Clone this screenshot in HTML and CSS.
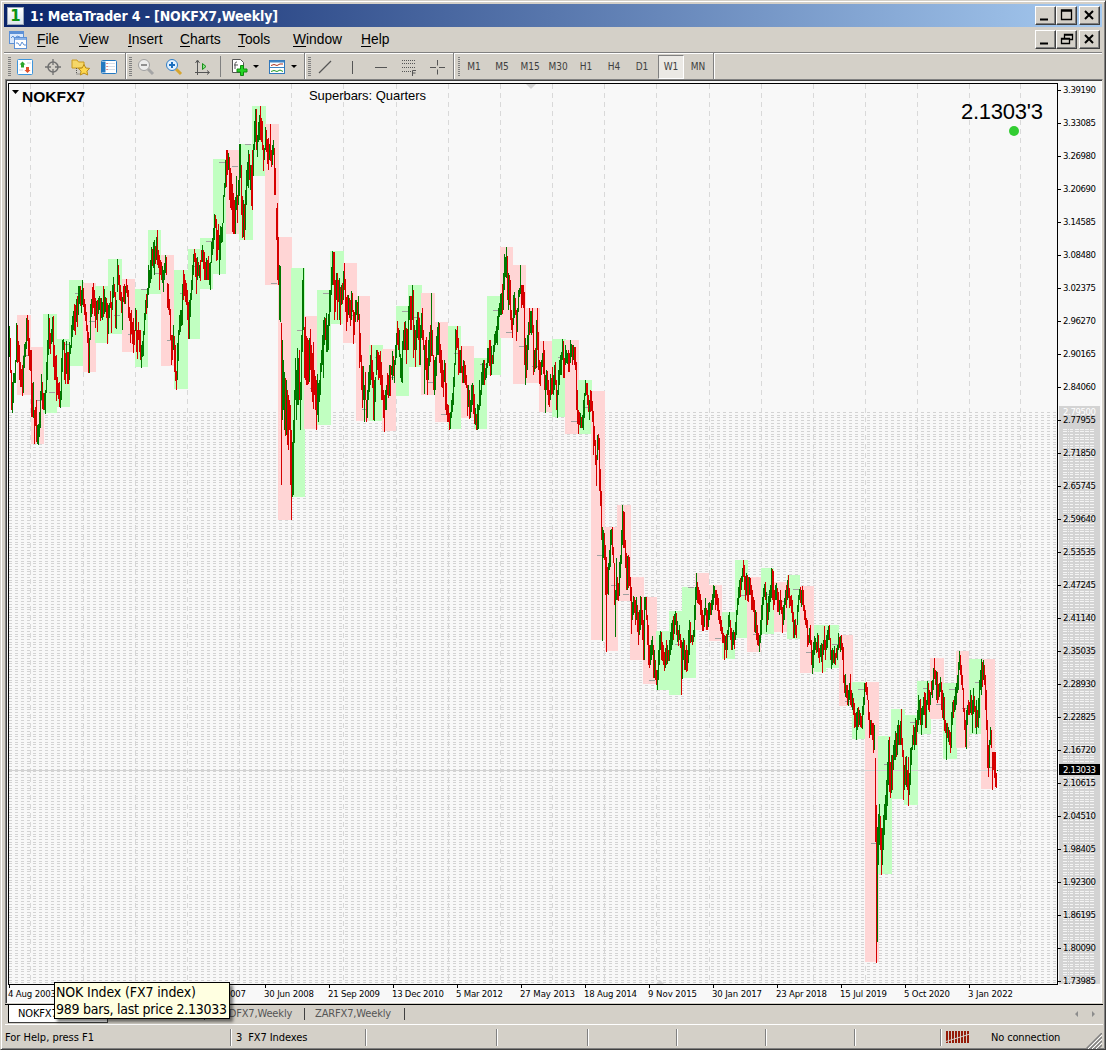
FILE: index.html
```html
<!DOCTYPE html>
<html lang="en">
<head>
    <meta charset="UTF-8">
    <meta name="viewport" content="width=device-width, initial-scale=1.0">
    <link rel="stylesheet" href="styles.css">
    <title>1: MetaTrader 4 - [NOKFX7,Weekly]</title>
</head>
<body>
<div class="window">
    <header class="titlebar">
        <span class="app-icon">1</span>
        <h1 class="title"><svg width="249" height="20"><text x="0" y="15" textLength="248">1: MetaTrader 4 - [NOKFX7,Weekly]</text></svg></h1>
        <div class="controls">
            <span class="ctl"><svg width="17" height="14"><path d="M3 11.5h8" stroke="#000" stroke-width="2"/></svg></span>
            <span class="ctl"><svg width="17" height="14"><path d="M3.5 2v9.500h10v-9.500z M3 3h11" fill="none" stroke="#000" stroke-width="1.300"/></svg></span>
            <span class="ctl ctl-close"><svg width="17" height="14"><path d="M4 3l8 8M12 3l-8 8" stroke="#000" stroke-width="2"/></svg></span>
        </div>
    </header>

    <nav class="menubar">
        <svg class="doc-icon" width="20" height="20">
            <rect x="1.500" y="1.500" width="14" height="12" fill="#d9e8fb" stroke="#5d91d6"/>
            <path d="M2 3h13" stroke="#5d91d6" stroke-width="2"/>
            <path d="M3 8l2-2 2 3 2-3 3 1" fill="none" stroke="#5d91d6"/>
            <rect x="6.500" y="7.500" width="12" height="11" fill="#fff" stroke="#5d91d6"/>
            <path d="M7 9h11" stroke="#8bb3e8" stroke-width="2"/>
            <path d="M8 13h2l2 3 2-4 2 3h2" fill="none" stroke="#5d91d6"/>
        </svg>
        <span class="menu m-file"><u>F</u>ile</span>
        <span class="menu m-view"><u>V</u>iew</span>
        <span class="menu m-insert"><u>I</u>nsert</span>
        <span class="menu m-charts"><u>C</u>harts</span>
        <span class="menu m-tools"><u>T</u>ools</span>
        <span class="menu m-window"><u>W</u>indow</span>
        <span class="menu m-help"><u>H</u>elp</span>
        <div class="controls">
            <span class="ctl"><svg width="17" height="14"><path d="M3 11.500h8" stroke="#000" stroke-width="2"/></svg></span>
            <span class="ctl"><svg width="17" height="14"><path d="M6.500 6V2.500h8v5h-3M6 3h9M3.500 6.500h8v5h-8zM3 7h9" fill="none" stroke="#000" stroke-width="1.300"/></svg></span>
            <span class="ctl ctl-close"><svg width="17" height="14"><path d="M4 3l8 8M12 3l-8 8" stroke="#000" stroke-width="2"/></svg></span>
        </div>
    </nav>

    <div class="toolbar">
        <div class="group">
            <i class="grip"></i>
            <span class="tool"><svg width="18" height="18">
                <rect x="1.500" y="1.500" width="15" height="15" rx="1" fill="#fff" stroke="#3d95dc"/>
                <path d="M6.500 3.500l3 3H8v3H5v-3H3.500z" fill="#2aa52a"/>
                <path d="M11.500 15l-3-3H10V9h3v3h1.500z" fill="#e2502a"/>
                <path d="M11 5h4M3 12h4" stroke="#cbd6e2"/></svg></span>
            <span class="tool"><svg width="18" height="18">
                <circle cx="9" cy="9" r="5" fill="none" stroke="#707070" stroke-width="1.500"/>
                <path d="M9 1v6M9 11v6M1 9h6M11 9h6" stroke="#707070" stroke-width="1.300"/></svg></span>
            <span class="tool"><svg width="20" height="18">
                <path d="M1 2h5l1.500 2H13v6H1z" fill="#f5d768" stroke="#c99a20"/>
                <path d="M5.500 10v6h4" stroke="#555" fill="none" stroke-dasharray="1 1"/>
                <path d="M13 6.500l1.800 3.500 3.900.4-2.800 2.700.8 3.900-3.700-1.900L9.300 17l.8-3.900-2.800-2.700 3.900-.4z" fill="#ffd84d" stroke="#bb8d18"/></svg></span>
            <span class="tool"><svg width="18" height="18">
                <rect x="1.500" y="2.500" width="15" height="13" rx="1" fill="#fff" stroke="#2478c0"/>
                <path d="M2 3.500h3.500v11H2z" fill="#2478c0"/>
                <path d="M7 5.500h8M7 8.500h8M7 11.500h8" stroke="#d5dfe9"/>
                <path d="M6.500 5.500h1M6.500 8.500h1M6.500 11.500h1" stroke="#d33"/></svg></span>
        </div>
        <div class="group">
            <i class="grip"></i>
            <span class="tool"><svg width="18" height="18">
                <path d="M11 11l5 5" stroke="#a5a5a5" stroke-width="3"/>
                <circle cx="7" cy="7" r="5.500" fill="#ececec" stroke="#a0a0a0"/>
                <path d="M4 7h6" stroke="#909090" stroke-width="2"/></svg></span>
            <span class="tool"><svg width="18" height="18">
                <path d="M11 11l5 5" stroke="#d6a52f" stroke-width="3"/>
                <circle cx="7" cy="7" r="5.500" fill="#e2f1ff" stroke="#2f7dc4"/>
                <path d="M4 7h6M7 4v6" stroke="#1a6fc0" stroke-width="2"/></svg></span>
            <span class="tool"><svg width="18" height="18">
                <path d="M4.500 3v14M2 14.500h14M2.500 5l2-3 2 3M14 12.500l2.500 2-2.500 2" fill="none" stroke="#555"/>
                <path d="M9.500 5.500l3.500 3-3.500 3z" fill="#8be08b" stroke="#189018"/></svg></span>
            <i class="thin"></i>
            <span class="tool"><svg width="18" height="18">
                <path d="M2.500 1.500h8l3 3v10h-11z" fill="#fff" stroke="#555"/>
                <path d="M7 4c-2 0-2 1-2 3v4M4 7h4" fill="none" stroke="#555"/>
                <path d="M10.500 7.500h3v3.500h3.500v3h-3.500v3.500h-3V14H7v-3h3.500z" fill="#24d424" stroke="#108a10"/></svg></span>
            <i class="arrow"></i>
            <span class="tool tool-template"><svg width="18" height="18">
                <rect x="1.500" y="2.500" width="15" height="13" fill="#fff" stroke="#3077bb"/>
                <path d="M2 3.500h14" stroke="#3f84c4" stroke-width="2"/>
                <path d="M2 9.500h14" stroke="#3f84c4"/>
                <path d="M3 7.500l3-1 3 1 3-1.500h3" fill="none" stroke="#a32"/>
                <path d="M3 13.500l3-1 3 1 3-1.500 3 1.500" fill="none" stroke="#292"/></svg></span>
            <i class="arrow"></i>
        </div>
        <div class="group">
            <i class="grip"></i>
            <span class="tool"><svg width="18" height="18"><path d="M3 15L15 3" stroke="#555" stroke-width="1.200"/></svg></span>
            <span class="tool"><svg width="18" height="18"><path d="M8.500 3v13" stroke="#555"/></svg></span>
            <span class="tool"><svg width="18" height="18"><path d="M3 9.500h12" stroke="#555"/></svg></span>
            <span class="tool"><svg width="18" height="18"><path d="M2 2.500h14M2 5.500h14M2 9.500h14M2 13.500h10" stroke="#555" stroke-dasharray="1 1"/><path d="M16 12.500h-3.500V18M12.500 15h3" fill="none" stroke="#555"/></svg></span>
            <span class="tool"><svg width="18" height="18"><path d="M9.500 2v5.500M9.500 11.500v5M2 9.500h6M11 9.500h6" stroke="#555"/></svg></span>
        </div>
        <div class="group">
            <i class="grip"></i>
            <span class="tf">M1</span>
            <span class="tf">M5</span>
            <span class="tf">M15</span>
            <span class="tf">M30</span>
            <span class="tf">H1</span>
            <span class="tf">H4</span>
            <span class="tf">D1</span>
            <span class="tf tf-active">W1</span>
            <span class="tf">MN</span>
        </div>
    </div>

    <main class="chart-frame">
        <svg id="chart" class="chart" width="1094" height="921" viewBox="7 81 1094 921"></svg>
    </main>

    <div class="tabs">
        <span class="tab tab-active">NOKFX7,Weekly</span>
        <span class="tab">SEKFX7,Weekly</span>
        <span class="tab">SGDFX7,Weekly</span>
        <span class="tab">ZARFX7,Weekly</span>
        <svg class="scroller" width="26" height="10"><path d="M7 2L4 5l3 3zM21 2l3 3-3 3z" fill="#8c8c8c"/></svg>
    </div>

    <footer class="status">
        <span class="cell c-help">For Help, press F1</span>
        <span class="cell c-profile">3&nbsp; FX7 Indexes</span>
        <span class="cell c-bar"></span>
        <span class="cell c-open"></span>
        <span class="cell c-small"></span>
        <span class="cell c-small"></span>
        <span class="cell c-small"></span>
        <span class="cell c-last"></span>
        <span class="cell c-net">
            <svg width="24" height="13"><path d="M0 6h24" stroke="#951b08" stroke-width="12" stroke-dasharray="2 1"/><path d="M0 10.500L24 3" stroke="#d4d0c8"/></svg>
            No connection
        </span>
        <svg class="resize" width="16" height="16"><path d="M0 16L16 0M4 16L16 4M8 16L16 8M12 16l4-4" stroke="#808080" stroke-width="1.500"/><path d="M2 16L16 2M6 16L16 6M10 16l6-6" stroke="#fff"/></svg>
    </footer>

    <div class="tooltip">
        <svg width="174" height="35"><text x="1" y="14" textLength="140">NOK Index (FX7 index)</text><text x="1" y="31" textLength="171">989 bars, last price 2.13033</text></svg>
    </div>
</div>
<script src="chart.js"></script>
</body>
</html>
```

FILE: styles.css
```css
body {
    margin: 0;
    background: #d4d0c8;
    font-family: "DejaVu Sans Condensed", "DejaVu Sans", sans-serif;
    font-size: 11px;
    color: #000;
}

svg {
    display: block;
}

.window {
    position: relative;
    box-sizing: border-box;
    display: flex;
    flex-direction: column;
    width: 1106px;
    height: 1050px;
    padding: 2px 2px 0 3px;
    border: 1px solid #d4d0c8;
    border-right: 1px solid #404040;
    border-bottom: 1px solid #404040;
    background: #d4d0c8;
    box-shadow: inset 1px 1px #fff, inset -1px -1px #808080;
    overflow: hidden;
}

/* title and menu */

.titlebar {
    display: flex;
    align-items: center;
    box-sizing: border-box;
    height: 23px;
    margin-top: 1px;
    width: 1098px;
    padding: 0 2px 0 3px;
    background: linear-gradient(to right, #0a246a, #a6caf0);
}

.app-icon {
    width: 15px;
    height: 16px;
    border: 1px solid #9aa7b8;
    background: linear-gradient(#fff, #dde6ee);
    color: #0a9312;
    font: bold 15px/16px "DejaVu Sans", sans-serif;
    text-align: center;
}

.title {
    margin: 0 0 0 6px;
    font-size: 14px;
}

.title text {
    fill: #fff;
    font: bold 14px "DejaVu Sans Condensed", "DejaVu Sans", sans-serif;
}

.controls {
    display: flex;
    margin-left: auto;
}

.ctl {
    box-sizing: border-box;
    width: 21px;
    height: 19px;
    padding: 1px;
    border: 1px solid;
    border-color: #fff #404040 #404040 #fff;
    background: #d4d0c8;
    box-shadow: inset -1px -1px #808080;
}

.ctl-close {
    margin-left: 2px;
}

.menubar {
    display: flex;
    align-items: center;
    box-sizing: border-box;
    width: 1098px;
    height: 25px;
    padding: 0 2px 0 4px;
    font: 13.800px "Liberation Sans", Arial, sans-serif;
}

.doc-icon {
    margin-right: 9px;
}

.menu {
    white-space: nowrap;
}

.menu u {
    text-underline-offset: 2px;
}

.m-file { width: 42px; }
.m-view { width: 49px; }
.m-insert { width: 52px; }
.m-charts { width: 58px; }
.m-tools { width: 55px; }
.m-window { width: 68px; }

/* toolbar */

.toolbar {
    display: flex;
    box-sizing: border-box;
    width: 1098px;
    height: 27px;
    border-top: 1px solid #808080;
    box-shadow: inset 0 1px #fff;
}

.group {
    display: flex;
    align-items: center;
    box-sizing: border-box;
    padding: 1px 1px 0 4px;
    border-right: 1px solid #808080;
    box-shadow: 1px 0 #fff;
}

.group:nth-child(1) { width: 122px; }
.group:nth-child(2) { width: 179px; padding-left: 3px; }
.group:nth-child(3) { width: 149px; padding-left: 3px; }
.group:nth-child(4) { width: 260px; }

.grip {
    width: 3px;
    height: 19px;
    background: repeating-linear-gradient(#808080 0 1px, #d4d0c8 1px 2px);
}

.tool {
    display: flex;
    flex: none;
    justify-content: center;
    width: 28px;
}

.thin {
    width: 1px;
    height: 21px;
    margin: 0 4px;
    background: #808080;
}

.tool-template {
    margin-left: 4px;
}

.arrow {
    width: 0;
    height: 0;
    border: 3px solid transparent;
    border-top-color: #000;
    border-bottom: 0;
}

.tf {
    flex: none;
    box-sizing: border-box;
    width: 28px;
    font-size: 10px;
    line-height: 22px;
    text-align: center;
    color: #404040;
}

.tf-active {
    width: 26px;
    margin: 0 0 0 2px;
    border: 1px solid;
    border-color: #808080 #fff #fff #808080;
    background: #ebe9e5;
}

/* chart */

.chart-frame {
    box-sizing: border-box;
    width: 1098px;
    height: 925px;
    margin-left: 1px;
    border: 1px solid;
    border-color: #808080 #d4d0c8 #d4d0c8 #808080;
    background: #f8f8f8;
    box-shadow: inset 1px 1px #404040, inset -1px -1px #fff;
}

.chart {
    margin: 1px;
}

.chart text {
    font-family: "DejaVu Sans Condensed", "DejaVu Sans", sans-serif;
    font-size: 9.500px;
}

.chart .symbol {
    font: bold 15.500px "Liberation Sans", Arial, sans-serif;
}

.chart .caption {
    font: 13px "Liberation Sans", Arial, sans-serif;
}

.chart .quote {
    font: 22px "Liberation Sans", Arial, sans-serif;
}

.chart .label-light {
    fill: #fff;
}

/* chart tabs */

.tabs {
    display: flex;
    flex: none;
    box-sizing: border-box;
    width: 1098px;
    height: 21px;
    margin-left: 1px;
    padding-left: 3px;
    border-top: 1px solid #000;
    border-bottom: 1px solid #fff;
}

.tab {
    position: relative;
    box-sizing: border-box;
    width: 100px;
    padding-left: 7px;
    line-height: 17px;
    letter-spacing: -.15px;
    color: #555;
}

.tab:not(.tab-active)::after {
    content: "";
    position: absolute;
    right: 3px;
    top: 3px;
    width: 1px;
    height: 12px;
    background: #404040;
}

.tab-active {
    height: 18px;
    padding-left: 9px;
    border-right: 1px solid #404040;
    border-bottom: 1px solid #404040;
    border-left: 1px solid #000;
    background: #fff;
    color: #000;
}

.scroller {
    margin: 4px 6px 0 auto;
}

/* status bar */

.status {
    display: flex;
    flex: none;
    align-items: center;
    height: 24px;
    width: 1098px;
}

.cell {
    display: flex;
    align-items: center;
    box-sizing: border-box;
    height: 17px;
    padding-left: 3px;
    border-right: 1px solid #808080;
    box-shadow: 1px 0 #fff;
    white-space: pre;
}

.c-help { width: 227px; padding-left: 1px; }
.c-profile { width: 135px; padding-left: 5px; letter-spacing: -.1px; }
.c-bar { width: 131px; }
.c-open { width: 91px; }
.c-small { width: 89px; }
.c-last { width: 86px; }
.c-net { gap: 21px; padding-left: 5px; border: 0; box-shadow: none; letter-spacing: -.15px; }

.cell.c-net {
    white-space: nowrap;
}

.resize {
    margin-left: auto;
    align-self: flex-end;
}

.tooltip {
    position: absolute;
    left: 53px;
    top: 981px;
    width: 174px;
    height: 35px;
    border: 1px solid #000;
    background: #ffffe1;
    box-shadow: 3px 3px 3px rgba(0, 0, 0, .5);
}

.tooltip text {
    font: 14px "DejaVu Sans Condensed", "DejaVu Sans", sans-serif;
}
```

FILE: chart.js
```js
const NS = 'http://www.w3.org/2000/svg';
const chart = document.getElementById('chart');

function add(name, attrs, text) {
    const el = document.createElementNS(NS, name);
    for (const key in attrs) el.setAttribute(key, attrs[key]);
    if (text) el.textContent = text;
    chart.appendChild(el);
    return el;
}

function rect(x, y, width, height, fill) {
    add('rect', { x, y, width, height, fill, 'shape-rendering': 'crispEdges' });
}

function path(d, stroke, dash) {
    const attrs = { d, stroke, fill: 'none', 'shape-rendering': 'crispEdges' };
    if (dash) attrs['stroke-dasharray'] = dash;
    add('path', attrs);
}

// quarter boxes: left, top, right, bottom, direction, close mark
const quarters = `
17 315 31 395 r 355|31 347 44 444 r 400|43 314 57 413 g 392|57 339 70 407 g 344|69 280 83 366 g 293
83 283 96 372 r 321|95 286 109 343 g 0|108 259 122 334 g 315|122 279 135 352 r 334|135 289 148 367 g 289
148 230 161 294 g 273|161 255 174 366 r 340|174 270 188 389 g 293|188 249 200 339 g 266|200 238 213 289 g 241
213 159 226 274 g 162|226 150 240 234 r 166|239 144 253 240 g 144|252 106 266 176 g 0|265 124 279 285 r 283
278 237 292 520 r 0|291 268 305 497 g 330|304 316 318 429 r 388|317 290 331 425 g 293|330 251 344 324 g 0
343 263 357 343 r 315|356 296 370 421 r 409|369 345 383 421 g 357|382 349 396 431 r 377|396 306 409 396 g 311
408 285 422 367 g 317|421 293 435 395 r 382|435 322 448 422 r 414|448 326 461 429 g 353|461 346 474 418 r 0
474 358 487 429 g 364|487 296 501 375 g 310|500 247 513 338 r 332|513 265 526 384 r 346|526 308 540 383 r 366
539 341 552 412 r 0|552 339 566 417 g 357|565 340 579 434 r 421|578 380 592 434 g 407|591 391 605 640 r 555
605 527 618 651 r 585|617 505 631 601 r 594|630 577 644 660 r 0|643 597 657 684 r 680|656 631 670 690 g 0
669 611 682 695 g 644|682 587 696 678 g 587|695 573 709 630 r 615|709 585 722 641 r 638|722 612 735 659 g 636
735 560 748 638 g 595|747 577 761 652 r 634|761 568 774 634 g 594|774 582 787 632 r 601|787 575 800 639 g 589
800 586 814 673 r 652|814 625 826 672 g 0|826 625 839 668 g 644|839 635 853 706 r 701|852 682 866 739 g 689
865 682 879 962 r 843|878 736 892 874 g 764|891 709 905 799 g 0|904 715 918 805 g 722|917 681 931 734 g 688
930 658 944 719 r 704|943 683 957 759 g 689|956 651 969 748 r 708|969 659 982 734 g 682|981 659 995 789 r 767`;

// weekly bars, one per pixel column: start column, then high-low of each bar
const bars = `
9 g326-357 r338-373 r370-410 g382-413 g373-403 g373-383 g360-383 g323-362 r325-363 r341-362 r345-380
20 r362-387 r369-387 r365-396 g356-393 g344-368 g342-357 g318-349 r315-341 r320-356 r338-370
30 r350-371 r350-417 r383-417 g382-418 r410-444 r407-426 r400-442 g425-444 g424-445 g412-437
40 g391-428 g374-400 r382-409 r393-410 g393-410 g390-414 g362-393 g340-380 g314-355 r318-349
50 r333-354 g329-344 g317-342 r316-367 r345-380 r356-380 r355-401 r377-395 r383-399 r382-407
60 g391-408 g358-400 g340-372 g339-350 r342-380 r353-384 g341-374 r352-384 r352-384 g342-380
70 g345-354 g325-348 g316-337 g311-330 r304-331 r305-335 g299-322 r296-327 g286-315 g286-304
80 r286-306 g290-313 g280-305 r288-307 r299-315 r304-321 r312-331 r325-343 r332-373 g338-373
90 g304-340 g299-317 r287-314 r283-308 r290-316 r298-328 g301-320 r300-332 g298-314 g296-310
100 r298-321 g298-318 g302-320 r286-317 g289-314 g297-312 r298-318 r303-344 g305-334 g303-318
110 r291-308 r302-333 g285-310 g277-298 r284-297 r292-328 g300-329 g259-292 r265-285 r275-300
120 r285-301 r292-313 g297-330 r286-302 r284-304 g286-304 r279-293 r285-297 r290-318 r307-321
130 r313-343 r310-334 r322-344 r318-353 r330-345 g308-331 r310-352 r330-359 r322-340 r330-352
140 r330-360 g345-368 g341-357 g331-356 g313-335 g300-320 r294-314 g288-308 g265-295 g270-288
150 g260-283 g247-279 r249-266 g242-268 g240-275 r246-264 g237-260 r230-265 r250-268 r255-290
160 r260-275 r262-280 g266-283 g270-292 g263-280 g255-273 r257-275 r283-308 r284-310 r299-315
170 r309-340 r335-365 r335-360 g325-350 r336-372 r345-381 r371-390 g343-380 g330-361 g315-335
180 g310-332 g310-326 g284-325 r270-300 r274-296 r280-302 r283-305 r290-320 r302-339 g300-339
190 g293-317 g280-300 g265-290 g254-275 r249-262 r253-277 r258-294 g257-280 r262-276 g265-278
200 r260-281 r250-262 g245-262 r250-269 r252-280 r262-280 g258-280 r260-280 r256-280 g263-285
210 g262-290 g242-263 g238-255 g228-249 g214-240 r215-228 r219-261 r230-260 r224-250 g235-275
220 g226-260 g227-243 g223-242 g195-223 g183-197 g160-188 r150-187 r150-175 g153-170 r157-200
230 r168-208 r173-210 r184-232 r193-234 r200-234 g197-234 g176-210 r195-223 g180-205 g144-196
240 g144-178 r165-215 r196-238 g200-237 r204-240 g190-230 g170-205 g162-186 g150-188 r154-180
250 g165-190 r165-206 r150-210 g144-176 g121-150 g109-142 r109-150 g135-157 g122-142 g115-140
260 r106-140 r118-142 r121-150 r145-171 g148-160 g127-150 r130-152 r139-164 r138-170 g144-160
270 r124-161 r150-167 g145-165 g140-155 r148-195 r168-195 r208-240 r203-280 r237-285 g265-320
280 g266-322 r323-485 g340-420 g360-410 g372-430 r378-436 g380-435 r390-445 r395-450 r400-430
290 r405-485 r430-520 g442-497 g420-495 g390-443 g358-400 g370-420 g348-405 g358-405 r350-400
300 g382-430 g335-400 g280-352 g268-330 r327-378 r317-380 r336-385 r338-385 r340-384 g338-382
310 r329-370 r345-392 r353-402 r342-409 r370-395 r376-410 r380-430 g374-415 g383-422 g380-402
320 g363-395 g350-372 g335-365 g320-378 g317-345 r318-340 g313-352 g325-352 g314-350 g290-326
330 g290-312 g267-295 g251-285 r252-285 r252-320 r280-312 g273-300 r273-320 r280-302 g278-320
340 r287-325 g285-305 r283-304 g271-300 r263-290 r279-312 r297-331 r295-322 g295-315 r298-318
350 r300-326 g291-320 r293-312 r310-344 r312-335 g300-322 g300-315 r302-322 g296-320 r314-368
360 r333-362 r355-390 r366-408 g366-400 g385-422 r372-400 r400-422 g390-418 g372-400 g365-392
370 g355-385 r345-380 r360-388 r372-420 g380-421 g377-402 g350-375 r350-370 r352-380 r355-378
380 r351-385 r362-400 r375-400 r390-418 r395-432 g390-410 g385-410 r373-395 r375-398 g365-396
390 r365-396 g366-375 g351-380 r356-376 g360-383 g345-365 g333-358 r321-345 r328-350 g330-357
400 g354-378 g358-382 g341-383 g330-350 r322-350 g321-350 r328-364 r329-350 g306-350 g296-320
410 r296-330 r296-330 g285-320 r290-358 g325-350 r330-367 g320-350 g312-338 r312-340 r318-365
420 g325-365 g313-338 r308-340 r330-350 g345-394 r340-370 r337-380 r358-395 g340-380 g332-366
430 r325-362 g293-356 r330-356 r355-390 g360-395 g357-390 g336-376 g327-355 g322-355 r323-363
440 r344-373 r350-387 r360-388 r370-397 g360-382 r363-410 r383-415 r404-422 r405-422 r413-430
450 g412-429 g400-418 g393-412 g377-405 g363-387 g329-365 r330-350 r326-348 r338-375 r350-373
460 g350-373 r346-373 r366-383 g360-383 r361-383 r365-385 r375-388 r385-416 g385-407 r390-419
470 g400-418 g385-412 g383-405 r385-414 r394-424 g408-425 r414-430 g404-430 g405-429 g380-410
480 g390-406 g372-395 g363-385 g360-385 r360-385 g368-380 g363-378 g348-368 g348-363 r340-366
490 r340-376 g346-375 r355-364 g345-364 g334-352 g331-345 g326-343 g316-345 g308-330 g303-317
500 g294-315 g293-315 r284-314 g273-310 g254-290 g257-277 g247-278 r256-300 g273-310 r275-305
510 r280-320 r310-330 r318-338 g295-325 g292-318 r298-315 r310-341 g308-332 g290-312 g288-297
520 g265-294 r285-308 r285-305 r285-308 r292-365 g338-385 r345-378 g335-370 g322-350 r308-335
530 g311-333 g311-335 r308-333 r325-375 g350-372 r348-369 g320-368 r308-350 r332-370 r360-384
540 r362-386 g360-375 g353-367 r341-374 r350-390 g375-413 g370-390 r371-395 r380-405 r390-407
550 g374-400 r378-395 r367-394 g375-395 g365-390 r362-385 r380-410 g390-418 g370-395 g360-385
560 g355-375 g352-375 g339-360 r341-378 r358-378 g345-365 g350-363 g353-364 r350-372 r353-372
570 g340-363 g344-357 r345-365 g345-360 r347-365 r347-370 r362-410 r390-424 r410-434 r412-425
580 g413-428 r417-428 g415-428 g400-430 g393-418 g380-396 r383-395 r383-405 r395-412 g400-420
590 r390-412 r391-411 r401-422 r411-455 r426-446 r440-465 r455-486 g435-460 r434-450 r438-491
600 r469-506 r491-540 g527-641 g530-558 r533-560 r545-595 r557-652 r567-594 g563-595 g550-570
610 g530-567 g529-545 r527-555 r547-563 r563-605 g590-637 g558-600 r577-600 r583-601 g562-596
620 g555-578 g530-564 g505-545 r511-548 r512-548 r540-568 r553-590 g556-590 r555-588 r557-586
630 r577-601 r587-634 g602-620 g596-615 r597-613 r600-625 g597-620 r605-632 r612-645 g610-635
640 g596-630 r597-625 r610-640 r620-660 g597-660 g597-610 r597-620 r615-645 r625-665 r645-668
650 g645-665 g640-660 g636-655 r645-678 g650-678 r660-680 r670-685 g670-690 g650-680 g635-665
660 g631-650 r632-660 r642-661 r645-665 r652-671 g648-668 r640-665 g645-664 r650-661 g640-661
670 g632-655 g623-650 g620-645 r616-640 g614-634 g611-625 r613-635 g621-642 r630-646 g625-640
680 r634-648 r640-695 g642-679 g638-660 r640-670 g650-670 r645-672 r650-671 g630-663 g620-655
690 r622-643 g635-642 r635-645 g630-642 g605-637 g587-620 g573-600 r582-603 r587-604 r590-605
700 r594-615 r600-625 r610-631 r615-631 g608-627 g598-615 r608-630 r610-630 g603-627 g602-620
710 r603-615 g600-615 g594-610 g585-605 g586-598 r590-610 r590-605 r594-611 r598-620 r610-624
720 r616-631 r620-634 r627-643 r633-643 r635-660 g636-650 r634-658 g630-650 g615-635 g612-627
730 r620-640 r628-650 g632-650 g630-645 r632-649 g622-640 g610-635 g598-615 g587-605 g580-598
740 r578-597 g576-590 g568-582 r560-577 r565-590 r576-600 g573-595 r575-601 r577-602 g577-595
750 r578-595 r585-610 r590-610 r597-612 r600-632 g610-633 r612-640 r625-645 r633-646 g635-652
760 g620-643 g605-635 g597-620 g588-605 g584-597 r582-600 g592-632 r603-625 g596-620 g590-612
770 g585-602 g568-598 r569-600 r571-610 r590-605 g585-600 g583-600 r588-612 r592-612 g600-615
780 r590-610 r600-614 r607-633 g605-625 g598-620 g590-605 r585-608 g580-600 r575-598 r588-608
790 r596-606 r595-613 r600-622 r612-638 g620-638 r619-635 r625-638 g605-625 g595-612 g589-600
800 r587-603 g590-607 r586-605 r590-611 r605-620 r610-625 r618-628 r620-647 r635-645 g628-643
810 r625-645 r640-665 g650-674 g642-668 g636-655 g638-650 r642-653 g633-652 r635-658 r648-663
820 g645-657 g643-662 r644-673 g640-655 r626-650 r640-660 g635-650 g630-648 g626-640 r625-640
830 r638-660 g650-669 g648-665 r650-663 g646-664 r653-665 r648-658 g645-660 g633-650 r637-648
840 g636-652 r635-650 r643-660 r647-683 r675-693 g674-697 r685-698 r685-705 g690-706 g683-700
850 r674-705 r690-707 g693-710 r698-715 r703-728 r713-727 g712-740 g708-730 r707-727 g710-725
860 r713-727 r716-728 g706-729 g697-715 g683-705 r683-692 r682-695 r687-700 r700-720 r712-738
870 g720-735 r720-735 r723-740 r723-753 g725-750 r758-842 r805-963 g827-942 g814-865 g804-845
880 r816-850 r828-875 g828-865 g815-850 g804-835 g795-820 g780-820 g762-806 g740-785 r737-792
890 r762-798 g755-793 r755-790 g745-770 g740-760 g731-760 r733-757 g725-755 g720-745 r725-745
900 g721-745 r709-745 r738-757 r750-800 g765-790 r757-785 g756-787 r770-790 r757-806 g773-795
910 g748-785 g747-765 g735-750 r725-745 g727-750 g718-745 r720-745 g710-732 g695-725 g700-720
920 r699-725 g708-735 g706-725 g697-715 r692-715 r693-728 g700-728 g681-705 r683-710 r690-712
930 g692-705 r681-695 g680-698 g668-690 r658-679 r670-685 g671-700 r672-703 r684-700 g683-697
940 g677-692 r682-710 r690-718 g693-720 r697-731 r720-733 g723-760 r723-738 g727-742 r730-745
950 r732-753 g712-748 g702-725 r700-718 g696-712 g687-710 g683-705 g675-693 g662-690 g651-670
960 r655-675 r665-685 r675-690 r688-712 r708-730 r720-747 g710-749 g705-725 r700-715 r702-715
970 g690-713 r695-715 g700-733 g688-714 r696-712 r706-728 g700-734 r710-727 g698-728 g680-718
980 g670-690 g659-695 r662-687 g660-680 r665-685 r675-710 r690-730 r720-768 r745-777 g740-768
990 g727-745 r730-748 r752-790 r752-770 r752-778 r752-787 r773-788 g770-771`;

const prices = ['3.39190', '3.33085', '3.26980', '3.20690', '3.14585', '3.08480', '3.02375',
    '2.96270', '2.90165', '2.84060', '2.77955', '2.71850', '2.65745', '2.59640', '2.53535',
    '2.47245', '2.41140', '2.35035', '2.28930', '2.22825', '2.16720', '2.10615', '2.04510',
    '1.98405', '1.92300', '1.86195', '1.80090', '1.73985'];

// label and its width
const dates = [['4 Aug 2003', 48], ['25 Oct 2004', 51], ['16 Jan 2006', 50], ['9 Apr 2007', 46],
    ['30 Jun 2008', 50], ['21 Sep 2009', 52], ['13 Dec 2010', 52], ['5 Mar 2012', 47],
    ['27 May 2013', 55], ['18 Aug 2014', 53], ['9 Nov 2015', 49], ['30 Jan 2017', 50],
    ['23 Apr 2018', 51], ['15 Jul 2019', 47], ['5 Oct 2020', 46], ['3 Jan 2022', 45]];

// grid
[30, 83, 135, 187, 239, 291, 343, 396, 448, 500, 552, 604, 656, 709, 761, 813, 865, 917, 969, 1020]
    .forEach(x => path(`M${x + .5} 84V984`, '#d9d9d9', '5 4'));

// price levels with their labels stacked in the axis
rect(1059, 406, 41, 578, '#d3d3d3');
add('text', { x: 1063, y: 415, textLength: 33, class: 'label-light' }, '2.79500');
for (let y = 412; y < 983; y += 2.7027) {
    const row = Math.round(y) + .5;
    path(`M9 ${row}H1057`, '#d3d3d3', '3 3');
    if (y > 424) path(`M1063 ${row + 3}H1096`, '#f4f4f4', '4 1 1 1 3 2 4 1 4 1 4 1 4 2');
}

for (const item of quarters.trim().split(/[|\n]/)) {
    const [l, t, r, b, dir, mark] = item.split(' ');
    rect(+l, +t, r - l, b - t, dir === 'g' ? '#c1ffc1' : '#ffd5d5');
    if (+mark) rect(+l + 6, +mark, 6, 1, '#a0a0a0');
}

path('M9 770.5H1057', '#d3d3d3');

let up = '', down = '';
for (const line of bars.trim().split('\n')) {
    const [start, ...items] = line.split(' ');
    items.forEach((item, i) => {
        const [hi, lo] = item.slice(1).split('-');
        const d = `M${+start + i + .5} ${hi}V${lo}`;
        if (item[0] === 'g') up += d;
        else down += d;
    });
}
path(up, '#007800');
path(down, '#d60000');

// borders and axes
path('M8.5 984V83.5H1057.5V984.5H8', '#000');
prices.forEach((price, i) => {
    const y = 90.5 + i * 33;
    path(`M1058 ${y}h3`, '#000');
    add('text', { x: 1063, y: y + 2.5, textLength: 33 }, price);
});
dates.forEach(([date, width], i) => {
    path(`M${9.5 + i * 64} 985v3`, '#000');
    add('text', { x: 8 + i * 64, y: 997, textLength: width }, date);
});

rect(1059, 764, 41, 11, '#000');
add('text', { x: 1063, y: 773, textLength: 33, class: 'label-light' }, '2.13033');

// chart captions
add('path', { d: 'M526 84h10l-5 5z', fill: '#d3d3d3' });
add('path', { d: 'M656 984h8l-4-4z', fill: '#d3d3d3' });
add('path', { d: 'M12 90h7l-3.500 4z' });
add('text', { x: 22, y: 102, textLength: 63, class: 'symbol' }, 'NOKFX7');
add('text', { x: 309, y: 100, textLength: 117, class: 'caption' }, 'Superbars: Quarters');
add('text', { x: 961, y: 119, textLength: 82, class: 'quote' }, "2.1303'3");
add('circle', { cx: 1014, cy: 131, r: 5, fill: '#32cd32' });
```
